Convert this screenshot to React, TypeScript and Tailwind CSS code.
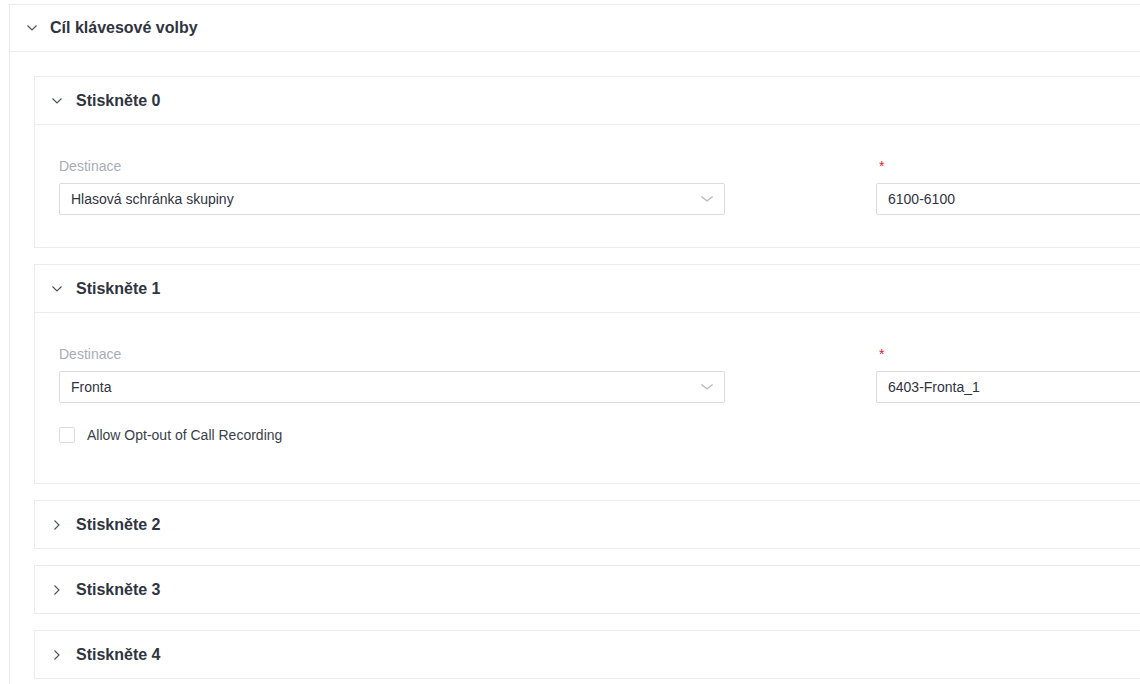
import type { ReactNode } from "react";

const FONT = { fontFamily: '"Liberation Sans", Arial, sans-serif' };

function ChevronDown({ className = "" }: { className?: string }) {
  return (
    <svg className={className} width="10" height="6" viewBox="0 0 10 6" fill="none">
      <polyline points="0.5,0.5 5,5 9.5,0.5" stroke="currentColor" strokeWidth="1.1" />
    </svg>
  );
}

function ChevronRight({ className = "" }: { className?: string }) {
  return (
    <svg className={className} width="6" height="10" viewBox="0 0 6 10" fill="none">
      <polyline points="0.5,0.5 5,5 0.5,9.5" stroke="currentColor" strokeWidth="1.1" />
    </svg>
  );
}

function Section({
  title,
  open,
  children,
}: {
  title: string;
  open: boolean;
  children?: ReactNode;
}) {
  return (
    <div className="border border-[#e9ebf0] bg-white">
      <div className="h-[47px] flex items-center">
        <div className="w-[41px] pl-[17px] flex items-center text-[#4a4f5c]">
          {open ? <ChevronDown /> : <ChevronRight className="ml-[2px]" />}
        </div>
        <span className="text-[16px] font-bold text-[#303441]">{title}</span>
      </div>
      {open && <div className="border-t border-[#e9ebf0] px-6 pt-[31px]">{children}</div>}
    </div>
  );
}

function Field({ value, select }: { value: string; select?: boolean }) {
  return (
    <div className="h-[32px] border border-[#d9dbe3] rounded-[2px] flex items-center px-[11px] justify-between">
      <span className="text-[14px] text-[#303441]">{value}</span>
      {select && <ChevronDown className="text-[#b8bbc4] mr-[1px] scale-x-125" />}
    </div>
  );
}

function Row({ dest, target }: { dest: string; target: string }) {
  return (
    <div className="grid grid-cols-[666px_666px] gap-x-[151px]">
      <div>
        <div className="h-[20px] leading-[20px] text-[14px] text-[#a9acb6] mb-[7px]">Destinace</div>
        <Field value={dest} select />
      </div>
      <div>
        <div className="h-[20px] leading-[20px] text-[14px] text-[#e0201f] mb-[7px] pl-[3px]">*</div>
        <Field value={target} />
      </div>
    </div>
  );
}

export default function App() {
  return (
    <div className="w-[1140px] h-[684px] overflow-hidden bg-white" style={FONT}>
      <div className="pl-[9px] pt-[4px]">
        <div className="w-[1600px] border border-[#e9ebf0]">
          <div className="h-[46px] flex items-center">
            <div className="w-[40px] pl-[17px] flex items-center text-[#4a4f5c]">
              <ChevronDown />
            </div>
            <span className="text-[16px] font-bold text-[#303441]">Cíl klávesové volby</span>
          </div>
          <div className="border-t border-[#e9ebf0] px-6 pt-6 pb-6 flex flex-col gap-4">
            <Section title="Stiskněte 0" open>
              <div className="pb-8">
                <Row dest="Hlasová schránka skupiny" target="6100-6100" />
              </div>
            </Section>
            <Section title="Stiskněte 1" open>
              <div className="pb-[40px]">
                <Row dest="Fronta" target="6403-Fronta_1" />
                <label className="mt-[24px] flex items-center gap-[12px] h-[16px]">
                  <span className="w-[16px] h-[16px] border border-[#d9dbe3] rounded-[2px] bg-white" />
                  <span className="text-[14px] text-[#3a3e4a]">Allow Opt-out of Call Recording</span>
                </label>
              </div>
            </Section>
            <Section title="Stiskněte 2" open={false} />
            <Section title="Stiskněte 3" open={false} />
            <Section title="Stiskněte 4" open={false} />
          </div>
        </div>
      </div>
    </div>
  );
}
